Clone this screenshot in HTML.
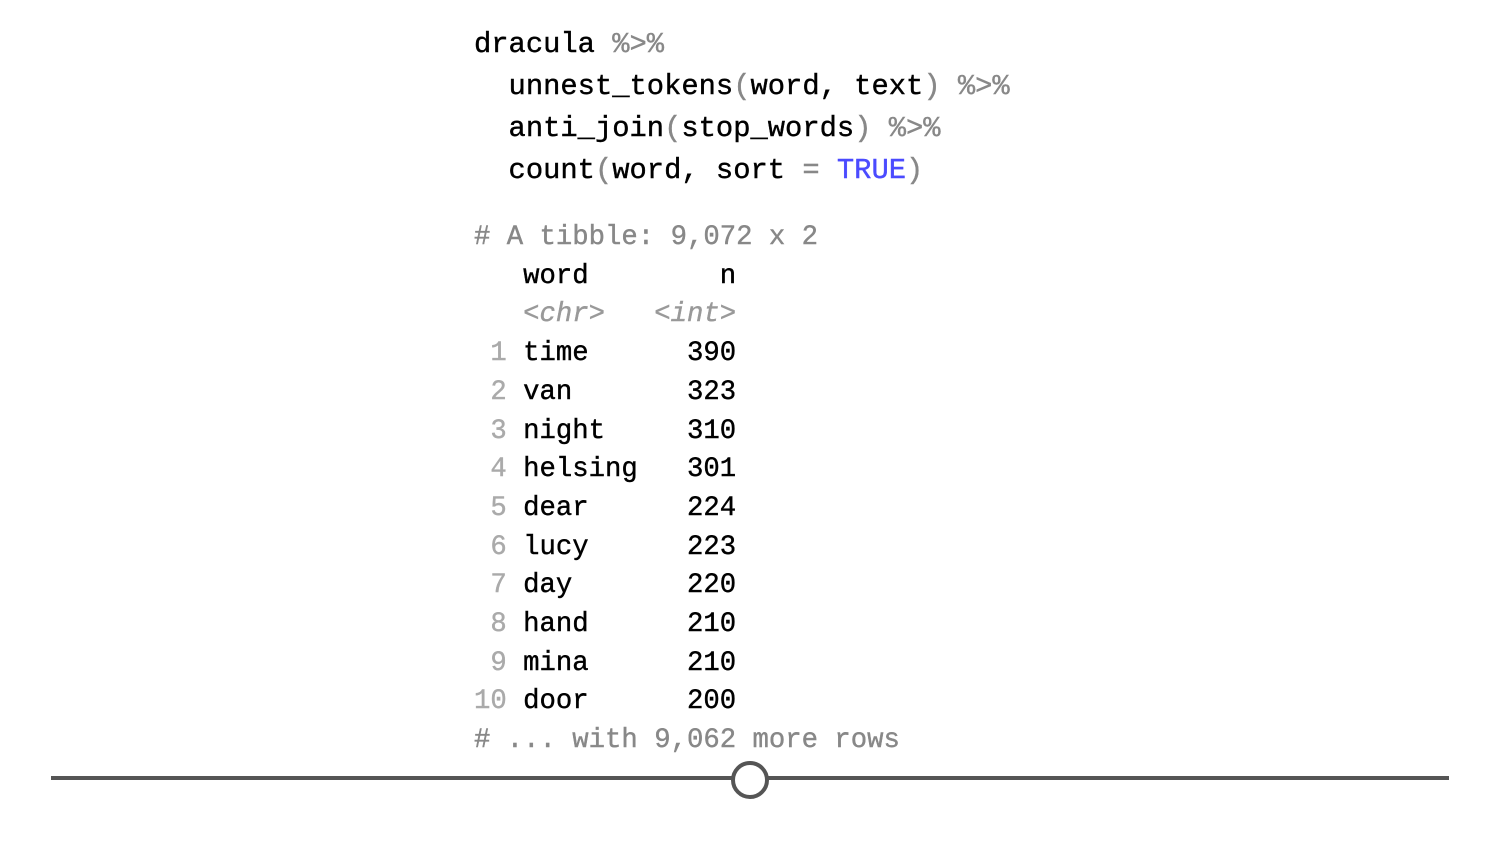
<!DOCTYPE html>
<html><head><style>
body{margin:0;width:1500px;height:844px;background:#fff;overflow:hidden;position:relative}
pre{margin:0;position:absolute;font-family:"Liberation Mono","DejaVu Sans Mono",monospace;white-space:pre;color:#000;-webkit-text-stroke:0.4px currentColor}
.c{left:474px;top:24px;font-size:28.8px;line-height:42px}
.o{left:474px;top:219px;font-size:27.3px;line-height:38.7px}
.g{color:#888}.gl{color:#aaa}.b{color:#4b4bff}
.i{font-style:italic;color:#999}
</style></head><body>
<pre class="c">dracula <span class="g">%&gt;%</span>
  unnest_tokens<span class="g">(</span>word, text<span class="g">)</span> <span class="g">%&gt;%</span>
  anti_join<span class="g">(</span>stop_words<span class="g">)</span> <span class="g">%&gt;%</span>
  count<span class="g">(</span>word, sort <span class="g">=</span> <span class="b">TRUE</span><span class="g">)</span></pre>
<pre class="o"><span class="g"># A tibble: 9,072 x 2</span>
   word        n
   <span class="i">&lt;chr&gt;</span>   <span class="i">&lt;int&gt;</span>
<span class="gl"> 1</span> time      390
<span class="gl"> 2</span> van       323
<span class="gl"> 3</span> night     310
<span class="gl"> 4</span> helsing   301
<span class="gl"> 5</span> dear      224
<span class="gl"> 6</span> lucy      223
<span class="gl"> 7</span> day       220
<span class="gl"> 8</span> hand      210
<span class="gl"> 9</span> mina      210
<span class="gl">10</span> door      200
<span class="g"># ... with 9,062 more rows</span></pre>
<div style="position:absolute;left:51px;top:776px;width:1398px;height:4px;background:#555"></div>
<div style="position:absolute;left:731px;top:761px;width:30px;height:30px;border:4px solid #555;border-radius:50%;background:#fff"></div>
</body></html>
